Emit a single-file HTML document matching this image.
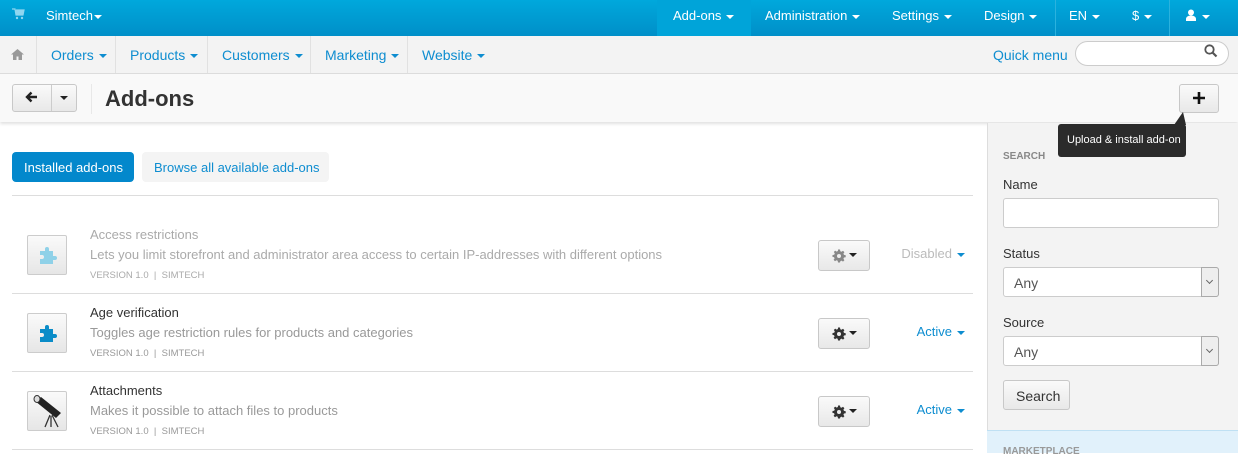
<!DOCTYPE html>
<html><head><meta charset="utf-8"><style>
*{box-sizing:border-box;margin:0;padding:0}
body{width:1238px;height:453px;overflow:hidden;font-family:"Liberation Sans",Arial,sans-serif;background:#fff;position:relative;font-size:13px}
.a{position:absolute}
.top{left:0;top:0;width:1238px;height:36px;background:linear-gradient(#00a8dc,#008fc8)}
.top .t{position:absolute;top:8px;color:#fff;font-size:13px}
.car{display:inline-block;width:0;height:0;border-left:4px solid transparent;border-right:4px solid transparent;border-top:4px solid currentColor;vertical-align:middle;margin-left:5px}
.nav2{left:0;top:36px;width:1238px;height:38px;background:#f3f3f3;border-bottom:1px solid #ddd}
.nav2 .i{position:absolute;top:0;height:37px;border-left:1px solid #e1e1e1;color:#0e8dd0;padding-top:11px;font-size:14px}
.tb{left:0;top:74px;width:1238px;height:48px;background:#f9f9f9;box-shadow:0 2px 3px rgba(0,0,0,.12)}
.btn{position:absolute;border:1px solid #c8c8c8;border-radius:3px;background:linear-gradient(#fafafa,#e8e8e8)}
.side{left:987px;top:123px;width:251px;height:330px;background:#f3f3f3;border-left:1px solid #ddd}
.lbl{position:absolute;left:1003px;color:#333;font-size:13px}
.inp{position:absolute;left:1003px;width:216px;height:30px;background:#fff;border:1px solid #ccc;border-radius:3px}
.sel .ar{position:absolute;right:-1px;top:-1px;width:18px;height:30px;border:1px solid #aaa;background:#eee;border-radius:0 3px 3px 0}
.sel .ar:after{content:"";position:absolute;left:5px;top:10px;width:4px;height:4px;border-right:1px solid #666;border-bottom:1px solid #666;transform:rotate(45deg)}
.sel span{position:absolute;left:10px;top:7px;color:#555;font-size:14px}
.hr{position:absolute;left:12px;width:961px;height:1px;background:#ddd}
.ico{position:absolute;left:27px;width:40px;height:40px;border:1px solid #ccc;border-radius:2px;background:linear-gradient(#fafafa,#e6e6e6)}
.nm{position:absolute;left:90px;font-size:13px;color:#333}
.ds{position:absolute;left:90px;font-size:13px;color:#999}
.vr{position:absolute;left:90px;font-size:9.5px;color:#999}
.gear{position:absolute;left:818px;width:52px;height:31px}
.st{position:absolute;right:273px;font-size:13px;color:#0e8dd0}
</style></head><body>
<svg width="0" height="0" style="position:absolute"><defs><g id="g"><path d="M6 0.5h2l.3 1.7 1.3.6 1.4-1 1.4 1.4-1 1.4.6 1.3 1.7.3v2l-1.7.3-.6 1.3 1 1.4-1.4 1.4-1.4-1-1.3.6L8 13.5H6l-.3-1.7-1.3-.6-1.4 1-1.4-1.4 1-1.4-.6-1.3L.5 8V6l1.7-.3.6-1.3-1-1.4 1.4-1.4 1.4 1 1.3-.6z"/></g></defs></svg>
<div class="a top">
 <svg class="a" style="left:12px;top:8px" width="13" height="12" viewBox="0 0 13 12"><path d="M0 1h3l1 6h7l1-5H4" fill="#8fd6f0" stroke="#8fd6f0" stroke-width="1.2"/><circle cx="5" cy="10" r="1.2" fill="#8fd6f0"/><circle cx="10" cy="10" r="1.2" fill="#8fd6f0"/></svg>
 <div class="t" style="left:46px">Simtech<span class="car" style="margin-left:1px"></span></div>
 <div class="a" style="left:657px;top:0;width:94px;height:36px;background:#00a4d9"></div>
 <div class="t" style="left:673px">Add-ons<span class="car"></span></div>
 <div class="t" style="left:765px">Administration<span class="car"></span></div>
 <div class="t" style="left:892px">Settings<span class="car"></span></div>
 <div class="t" style="left:984px">Design<span class="car"></span></div>
 <div class="a" style="left:1055px;top:0;width:1px;height:36px;background:#2bb2de"></div>
 <div class="t" style="left:1069px">EN<span class="car"></span></div>
 <div class="t" style="left:1132px">$<span class="car"></span></div>
 <div class="a" style="left:1169px;top:0;width:1px;height:36px;background:#2bb2de"></div>
 <svg class="a" style="left:1185px;top:9px" width="12" height="12" viewBox="0 0 12 12"><circle cx="6" cy="3.5" r="3" fill="#fff"/><path d="M1 12v-2c0-2 2-3.5 5-3.5s5 1.5 5 3.5v2z" fill="#fff"/></svg>
 <div class="t" style="left:1197px"><span class="car"></span></div>
</div>
<div class="a nav2">
 <svg class="a" style="left:11px;top:13px" width="13" height="11" viewBox="0 0 13 11"><path d="M6.5 0L0 5.5h2V11h3.5V7.5h2V11H11V5.5h2z" fill="#999"/></svg>
 <div class="i" style="left:36px;padding-left:14px;width:80px">Orders<span class="car"></span></div>
 <div class="i" style="left:115px;padding-left:14px;width:93px">Products<span class="car"></span></div>
 <div class="i" style="left:207px;padding-left:14px;width:104px">Customers<span class="car"></span></div>
 <div class="i" style="left:310px;padding-left:14px;width:98px">Marketing<span class="car"></span></div>
 <div class="i" style="left:407px;padding-left:14px;width:90px">Website<span class="car"></span></div>
 <div class="a" style="left:993px;top:11px;color:#0e8dd0;font-size:14px">Quick menu</div>
 <div class="a" style="left:1075px;top:5px;width:154px;height:25px;background:#fff;border:1px solid #ccc;border-radius:13px"></div>
 <svg class="a" style="left:1204px;top:8px" width="14" height="14" viewBox="0 0 14 14"><circle cx="5.5" cy="5.5" r="4.2" fill="none" stroke="#555" stroke-width="1.8"/><path d="M8.5 8.5l4 4" stroke="#555" stroke-width="2.2"/></svg>
</div>
<div class="a tb">
 <div class="btn" style="left:12px;top:10px;width:65px;height:28px"></div>
 <div class="a" style="left:51px;top:11px;width:1px;height:26px;background:#ccc"></div>
 <svg class="a" style="left:25px;top:17px" width="13" height="12" viewBox="0 0 13 12"><path d="M12 6H3M6.5 1.5L2 6l4.5 4.5" fill="none" stroke="#222" stroke-width="2.4"/></svg>
 <div class="a" style="left:60px;top:22px;border-left:4px solid transparent;border-right:4px solid transparent;border-top:4px solid #222"></div>
 <div class="a" style="left:91px;top:10px;width:1px;height:30px;background:#e8e8e8"></div>
 <div class="a" style="left:105px;top:12px;font-size:22px;font-weight:bold;color:#333">Add-ons</div>
 <div class="btn" style="left:1179px;top:10px;width:40px;height:29px"></div>
 <svg class="a" style="left:1193px;top:18px" width="12" height="12" viewBox="0 0 12 12"><path d="M6 0v12M0 6h12" stroke="#111" stroke-width="2.6"/></svg>
</div>
<div class="a side"></div>
<div class="a" style="left:987px;top:430px;width:251px;height:23px;background:#e1f1fb;border-top:1px solid #bfe0f3"></div>
<div class="a" style="left:1003px;top:446px;font-size:10px;color:#999;font-weight:bold">MARKETPLACE</div>
<div class="a" style="left:1058px;top:124px;width:128px;height:33px;background:#2b2b2b;border-radius:3px;color:#fff;font-size:11px;padding:10px 0 0 9px">Upload &amp; install add-on</div>
<svg class="a" style="left:1170px;top:112px" width="16" height="14" viewBox="0 0 16 14"><path d="M13 0L4 13h12z" fill="#2b2b2b"/></svg>
<div class="a" style="left:1003px;top:151px;font-size:10px;color:#888;font-weight:bold">SEARCH</div>
<div class="lbl" style="top:177px">Name</div>
<div class="inp" style="top:198px"></div>
<div class="lbl" style="top:246px">Status</div>
<div class="inp sel" style="top:267px"><span>Any</span><div class="ar"></div></div>
<div class="lbl" style="top:315px">Source</div>
<div class="inp sel" style="top:336px"><span>Any</span><div class="ar"></div></div>
<div class="btn" style="left:1003px;top:380px;width:67px;height:30px;color:#333;font-size:14px;padding:7px 0 0 12px">Search</div>
<div class="a" style="left:12px;top:152px;width:122px;height:30px;background:#0388cc;border-radius:4px;color:#fff;font-size:13px;padding:8px 0 0 12px">Installed add-ons</div>
<div class="a" style="left:142px;top:152px;width:187px;height:30px;background:#f4f4f4;border-radius:4px;color:#0e8dd0;font-size:13px;padding:8px 0 0 12px">Browse all available add-ons</div>
<div class="hr" style="top:195px"></div>
<div class="hr" style="top:293px"></div>
<div class="hr" style="top:371px"></div>
<div class="hr" style="top:449px"></div>

<div class="ico" style="top:235px"><svg style="position:absolute;left:11px;top:11px" width="18" height="18" viewBox="0 0 18 18"><path d="M1 4h5V2a2 2 0 014 0v2h4v5h2a2 2 0 010 4h-2v4H1v-5h2a2 2 0 000-4H1z" fill="#8fd1e8"/></svg></div>
<div class="nm" style="top:227px;color:#aaa">Access restrictions</div>
<div class="ds" style="top:247px;color:#aaa">Lets you limit storefront and administrator area access to certain IP-addresses with different options</div>
<div class="vr" style="top:270px;color:#aaa">VERSION 1.0 &nbsp;|&nbsp; SIMTECH</div>
<div class="btn gear" style="top:240px"></div>
<svg class="a" style="left:832px;top:249px" width="14" height="14" viewBox="0 0 14 14"><use href="#g" fill="#888"/><circle cx="7" cy="7" r="2" fill="#eee"/></svg>
<div class="a" style="left:849px;top:253px;border-left:4px solid transparent;border-right:4px solid transparent;border-top:4px solid #222"></div>
<div class="st" style="top:246px;color:#bbb">Disabled<span class="car" style="color:#0e8dd0"></span></div>

<div class="ico" style="top:313px"><svg style="position:absolute;left:11px;top:11px" width="18" height="18" viewBox="0 0 18 18"><path d="M1 4h5V2a2 2 0 014 0v2h4v5h2a2 2 0 010 4h-2v4H1v-5h2a2 2 0 000-4H1z" fill="#0a8cc8"/></svg></div>
<div class="nm" style="top:305px">Age verification</div>
<div class="ds" style="top:325px">Toggles age restriction rules for products and categories</div>
<div class="vr" style="top:348px">VERSION 1.0 &nbsp;|&nbsp; SIMTECH</div>
<div class="btn gear" style="top:318px"></div>
<svg class="a" style="left:832px;top:327px" width="14" height="14" viewBox="0 0 14 14"><use href="#g" fill="#333"/><circle cx="7" cy="7" r="2" fill="#eee"/></svg>
<div class="a" style="left:849px;top:331px;border-left:4px solid transparent;border-right:4px solid transparent;border-top:4px solid #222"></div>
<div class="st" style="top:324px">Active<span class="car"></span></div>

<div class="ico" style="top:391px"><svg style="position:absolute;left:4px;top:3px" width="32" height="34" viewBox="0 0 32 34"><path d="M3 6l6-4 20 16-5 5z" fill="#222"/><ellipse cx="5" cy="4" rx="3" ry="3.5" fill="#ddd" stroke="#333"/><path d="M18 20l-5 12M19 21v11M20 20l6 12" stroke="#333" stroke-width="1.3"/></svg></div>
<div class="nm" style="top:383px">Attachments</div>
<div class="ds" style="top:403px">Makes it possible to attach files to products</div>
<div class="vr" style="top:426px">VERSION 1.0 &nbsp;|&nbsp; SIMTECH</div>
<div class="btn gear" style="top:396px"></div>
<svg class="a" style="left:832px;top:405px" width="14" height="14" viewBox="0 0 14 14"><use href="#g" fill="#333"/><circle cx="7" cy="7" r="2" fill="#eee"/></svg>
<div class="a" style="left:849px;top:409px;border-left:4px solid transparent;border-right:4px solid transparent;border-top:4px solid #222"></div>
<div class="st" style="top:402px">Active<span class="car"></span></div>
</body></html>
